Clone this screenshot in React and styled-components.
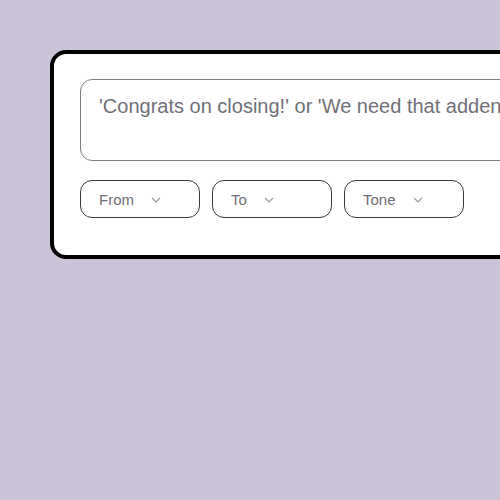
import React from "react"
import styled, { createGlobalStyle } from "styled-components"

const GlobalStyle = createGlobalStyle`
  html, body {
    margin: 0;
    padding: 0;
    background: #cbc4d8;
    overflow: hidden;
    font-family: "Liberation Sans", Arial, sans-serif;
  }
`

const Page = styled.div`
  width: 500px;
  height: 500px;
  padding: 50px 0 0 50px;
  box-sizing: border-box;
  overflow: hidden;
`

const Card = styled.div`
  width: 680px;
  height: 209px;
  box-sizing: border-box;
  background: #fff;
  border: 4px solid #000;
  border-radius: 16px;
  padding: 25px 26px;
  display: flex;
  flex-direction: column;
  gap: 19px;
`

const Message = styled.textarea`
  width: 100%;
  height: 82px;
  box-sizing: border-box;
  border: 1px solid #7d7d7d;
  border-radius: 12px;
  padding: 14px 18px 10px;
  font-family: "Liberation Sans", Arial, sans-serif;
  font-size: 20px;
  line-height: 24px;
  resize: none;
  outline: none;
  color: #222;
  &::placeholder {
    color: #707078;
  }
`

const Row = styled.div`
  display: flex;
  gap: 12px;
`

const Picker = styled.button`
  width: 120px;
  height: 38px;
  box-sizing: border-box;
  border: 1px solid #3a3a3a;
  border-radius: 12px;
  background: #fff;
  padding: 1px 0 0 18px;
  display: flex;
  align-items: center;
  gap: 17px;
  font-family: "Liberation Sans", Arial, sans-serif;
  font-size: 15px;
  color: #6e6e76;
  cursor: pointer;
`

const Chevron = () => (
  <svg width="10" height="6" viewBox="0 0 10 6" fill="none">
    <path d="M1 1l4 4 4-4" stroke="#9a9aa2" strokeWidth="1.2" />
  </svg>
)

export default function App() {
  return (
    <>
      <GlobalStyle />
      <Page>
        <Card>
          <Message autoFocus placeholder="'Congrats on closing!' or 'We need that addendum signed today'" />
          <Row>
            {["From", "To", "Tone"].map((label) => (
              <Picker key={label}>
                {label}
                <Chevron />
              </Picker>
            ))}
          </Row>
        </Card>
      </Page>
    </>
  )
}
